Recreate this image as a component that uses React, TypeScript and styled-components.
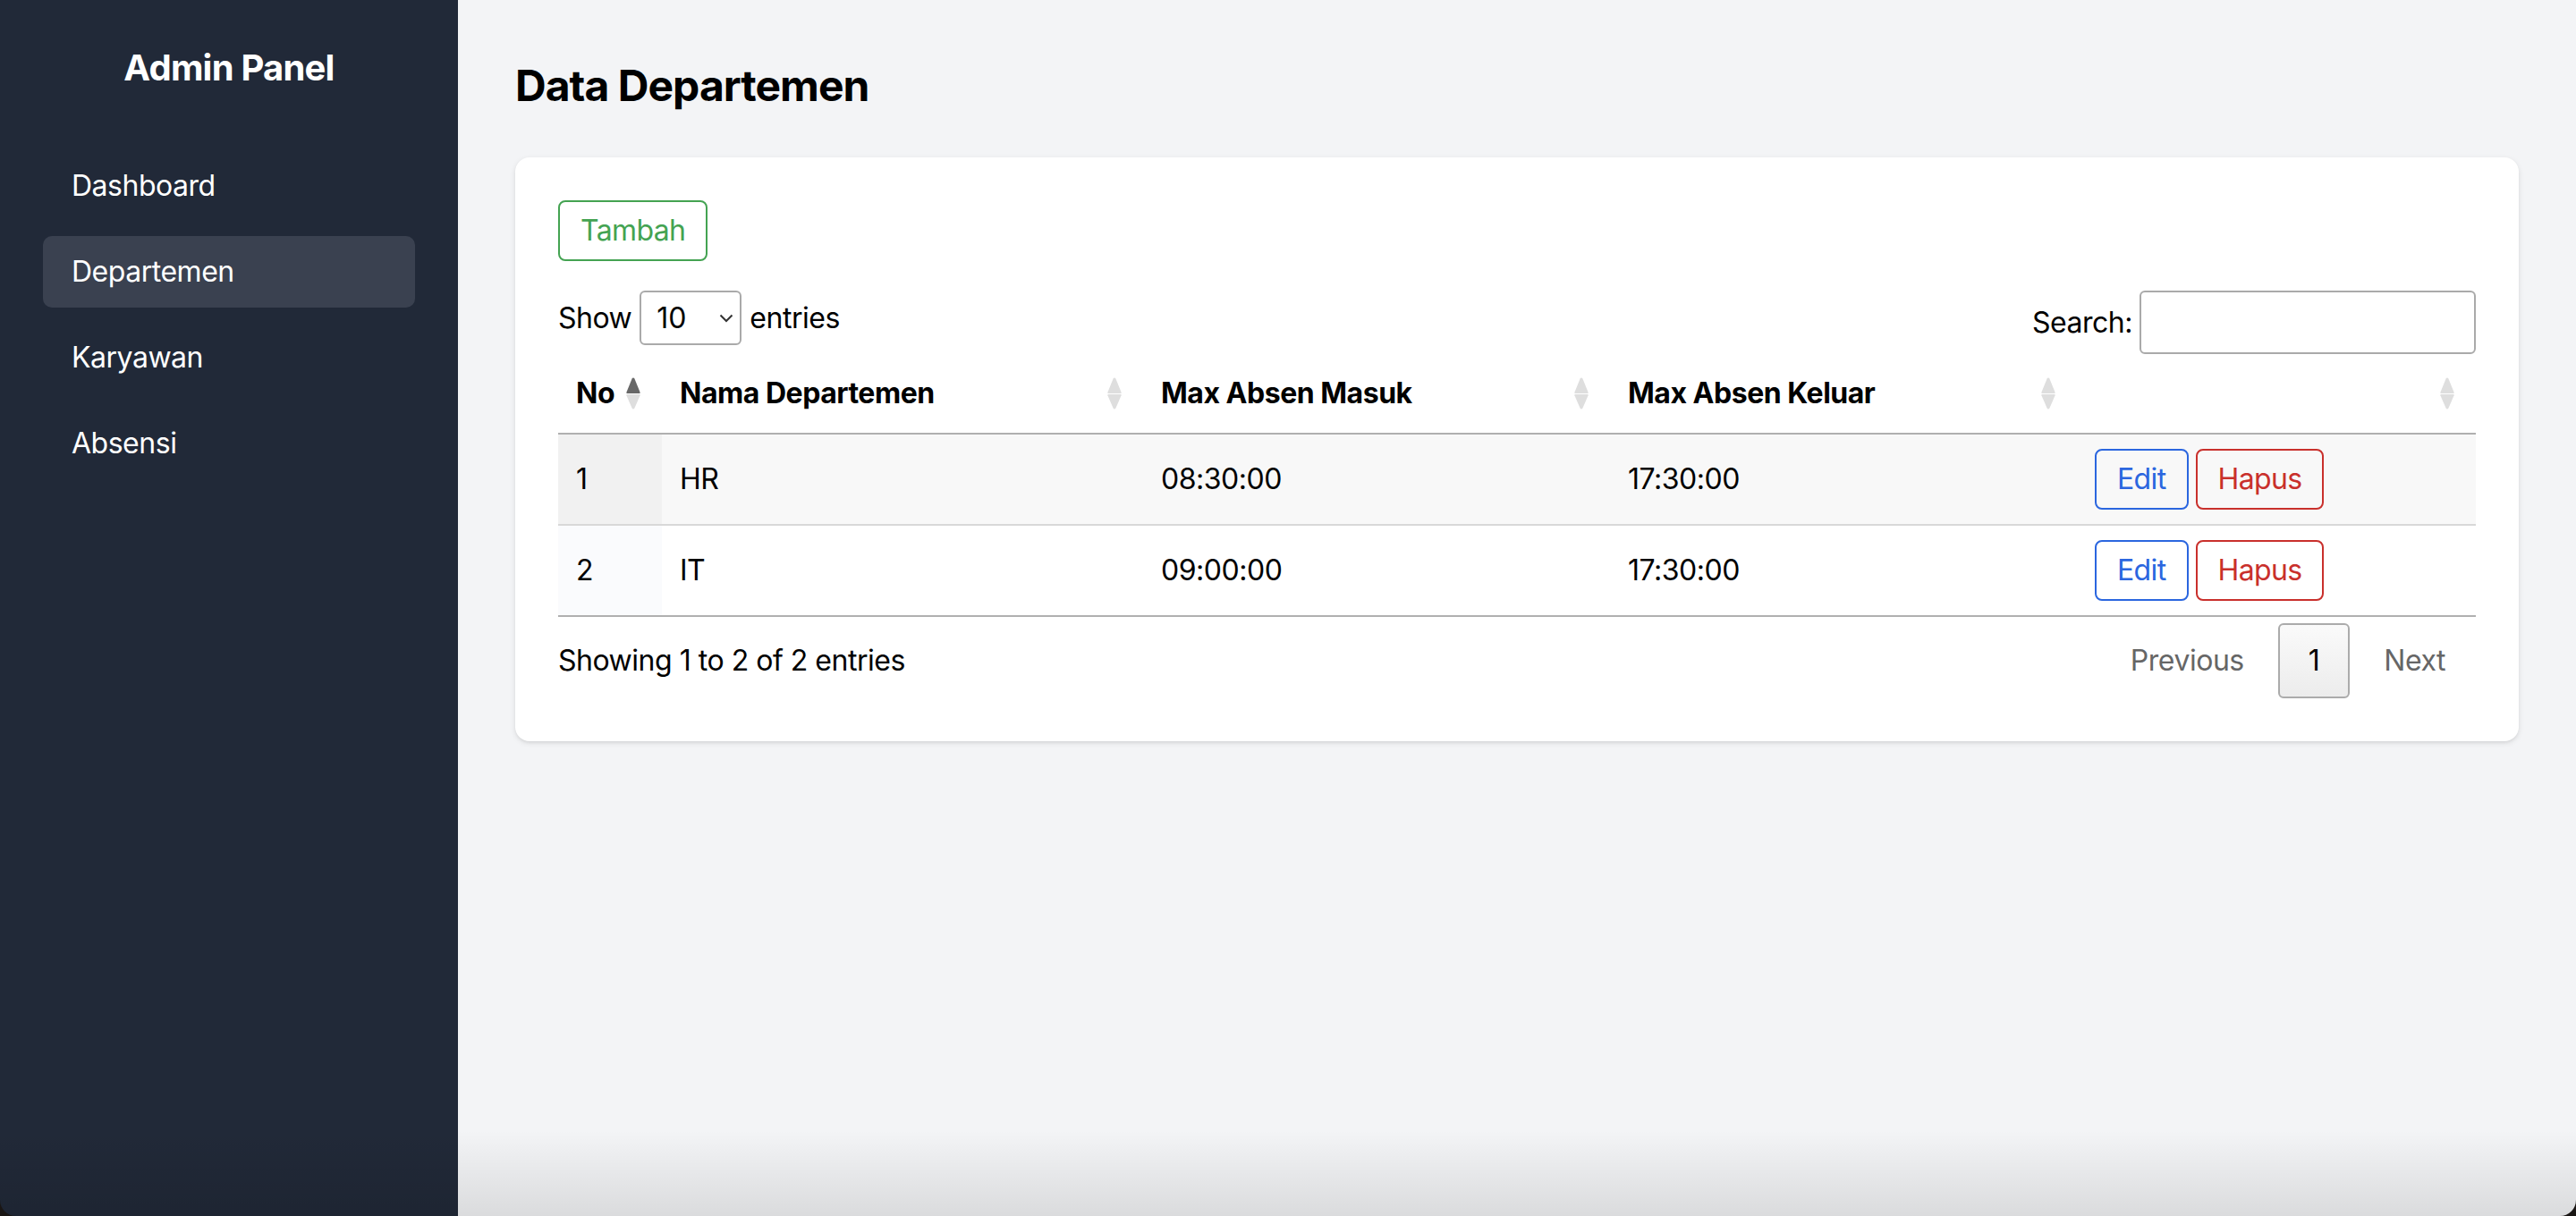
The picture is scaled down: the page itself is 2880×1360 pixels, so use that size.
import React from "react";
import styled, { createGlobalStyle } from "styled-components";

const GlobalStyle = createGlobalStyle`
  html, body {
    margin: 0;
    padding: 0;
    background: #1a1614;
  }
  body {
    font-family: Inter, "Noto Sans", "Liberation Sans", sans-serif;
    color: #000;
  }
  * { box-sizing: border-box; }
`;

const Frame = styled.div`
  position: relative;
  display: flex;
  width: 2880px;
  height: 1360px;
  border-radius: 0 0 18px 18px;
  overflow: hidden;
  &::after {
    content: "";
    position: absolute;
    left: 0;
    right: 0;
    bottom: 0;
    height: 96px;
    pointer-events: none;
    background: linear-gradient(to bottom, rgba(0, 0, 0, 0), rgba(0, 0, 0, 0.1));
  }
`;

const Sidebar = styled.aside`
  width: 512px;
  flex-shrink: 0;
  background: #212938;
  color: #fff;
  padding: 48px;
  display: flex;
  flex-direction: column;
`;

const Brand = styled.h1`
  margin: 0 0 64px;
  font-size: 40px;
  line-height: 56px;
  font-weight: 700;
  text-align: center;
  letter-spacing: -0.02em;
`;

const Nav = styled.nav`
  display: flex;
  flex-direction: column;
  gap: 16px;
`;

const NavItem = styled.a<{ $active?: boolean }>`
  display: block;
  padding: 16px 32px;
  font-size: 32px;
  line-height: 48px;
  color: #fff;
  text-decoration: none;
  border-radius: 10px;
  letter-spacing: -0.015em;
  background: ${(p) => (p.$active ? "#3a4150" : "transparent")};
`;

const Main = styled.main`
  flex: 1;
  background: #f3f4f6;
  padding: 64px;
`;

const PageTitle = styled.h2`
  margin: 0 0 48px;
  font-size: 48px;
  line-height: 64px;
  font-weight: 700;
  letter-spacing: -0.02em;
`;

const Card = styled.section`
  background: #fff;
  border-radius: 16px;
  box-shadow: 0 2px 6px rgba(0, 0, 0, 0.1), 0 2px 4px -2px rgba(0, 0, 0, 0.1);
  padding: 48px;
  font-size: 32px;
  line-height: 48px;
  letter-spacing: -0.015em;
`;

const OutlineButton = styled.button<{ $color: string }>`
  display: inline-block;
  font-family: inherit;
  font-size: 32px;
  line-height: 48px;
  letter-spacing: -0.02em;
  padding: 8px 23px;
  border: 2px solid ${(p) => p.$color};
  color: ${(p) => p.$color};
  background: transparent;
  border-radius: 8px;
  cursor: pointer;
`;

const AddRow = styled.div`
  margin-bottom: 33px;
`;

const Controls = styled.div`
  display: flex;
  justify-content: space-between;
  align-items: flex-start;
`;

const LabelGroup = styled.label<{ $gap?: number }>`
  display: flex;
  align-items: center;
  gap: ${(p) => p.$gap ?? 9}px;
`;

const SelectWrap = styled.span`
  position: relative;
  display: inline-flex;
`;

const Select = styled.select`
  appearance: none;
  -webkit-appearance: none;
  width: 114px;
  height: 61px;
  padding: 0 0 0 17px;
  border: 2px solid #aaa;
  border-radius: 6px;
  background: transparent;
  font-family: inherit;
  font-size: 32px;
  color: #000;
`;

const Chevron = styled.svg`
  position: absolute;
  right: 9px;
  top: 26px;
  pointer-events: none;
`;

const SearchInput = styled.input`
  width: 376px;
  height: 71px;
  border: 2px solid #aaa;
  border-radius: 6px;
  background: #fff;
  font-family: inherit;
  font-size: 32px;
  padding: 0 10px;
`;

const Table = styled.table`
  width: 100%;
  border-collapse: collapse;
  table-layout: fixed;
`;

const Th = styled.th`
  text-align: left;
  font-weight: 700;
  padding: 20px 24px 20px 20px;
  border-bottom: 2px solid #b0b0b0;
`;

const ThInner = styled.div`
  display: flex;
  align-items: center;
  justify-content: space-between;
  gap: 8px;
`;

const Tr = styled.tr<{ $odd?: boolean }>`
  background: ${(p) => (p.$odd ? "#f8f8f8" : "#fff")};
  &:not(:first-child) td {
    border-top: 2px solid #d8d8d8;
  }
  &:last-child td {
    border-bottom: 2px solid #b0b0b0;
  }
`;

const Td = styled.td<{ $sorted?: boolean; $odd?: boolean }>`
  padding: 16px 20px;
  vertical-align: middle;
  background: ${(p) => (p.$sorted ? (p.$odd ? "#f1f1f1" : "#fafbfd") : "transparent")};
`;

const Actions = styled.div`
  display: flex;
  gap: 8px;
`;

const Footer = styled.div`
  display: flex;
  justify-content: space-between;
  align-items: center;
  margin-top: 7px;
`;

const Pager = styled.div`
  display: flex;
  align-items: center;
`;

const PageButton = styled.span<{ $current?: boolean }>`
  display: inline-block;
  margin-left: 4px;
  padding: 16px 32px;
  border: 2px solid ${(p) => (p.$current ? "#ababab" : "transparent")};
  border-radius: 6px;
  color: ${(p) => (p.$current ? "#000" : "#666")};
  background: ${(p) =>
    p.$current ? "linear-gradient(to bottom, #fafafa 0%, #ececec 100%)" : "transparent"};
`;

const SortIcon: React.FC<{ active?: boolean }> = ({ active }) => (
  <svg width="16" height="36" viewBox="0 0 16 36" aria-hidden="true">
    <path
      d="M8 0.5 Q8.8 0.5 9.4 1.6 L15.6 16.8 Q16 18 14.8 18 L1.2 18 Q0 18 0.4 16.8 L6.6 1.6 Q7.2 0.5 8 0.5 Z"
      fill={active ? "#686868" : "#dedede"}
    />
    <path
      d="M1.2 19 L14.8 19 Q16 19 15.6 20.2 L9.4 34.4 Q8.8 35.5 8 35.5 Q7.2 35.5 6.6 34.4 L0.4 20.2 Q0 19 1.2 19 Z"
      fill="#dedede"
    />
  </svg>
);

const columns = [
  { title: "No", width: 116, active: true },
  { title: "Nama Departemen", width: 538 },
  { title: "Max Absen Masuk", width: 522 },
  { title: "Max Absen Keluar", width: 522 },
  { title: "", width: 446 },
];

const rows = [
  { no: 1, name: "HR", masuk: "08:30:00", keluar: "17:30:00" },
  { no: 2, name: "IT", masuk: "09:00:00", keluar: "17:30:00" },
];

export default function App() {
  return (
    <>
      <GlobalStyle />
      <Frame>
        <Sidebar>
          <Brand>Admin Panel</Brand>
          <Nav>
            <NavItem href="#">Dashboard</NavItem>
            <NavItem href="#" $active>
              Departemen
            </NavItem>
            <NavItem href="#">Karyawan</NavItem>
            <NavItem href="#">Absensi</NavItem>
          </Nav>
        </Sidebar>
        <Main>
          <PageTitle>Data Departemen</PageTitle>
          <Card>
            <AddRow>
              <OutlineButton $color="#44a352">Tambah</OutlineButton>
            </AddRow>
            <Controls>
              <LabelGroup>
                Show
                <SelectWrap>
                  <Select defaultValue="10">
                    <option value="10">10</option>
                    <option value="25">25</option>
                    <option value="50">50</option>
                    <option value="100">100</option>
                  </Select>
                  <Chevron width="16" height="10" viewBox="0 0 16 10">
                    <path d="M1.5 1.5 L8 8 L14.5 1.5" fill="none" stroke="#333" strokeWidth="2" />
                  </Chevron>
                </SelectWrap>
                entries
              </LabelGroup>
              <LabelGroup $gap={8}>
                Search:
                <SearchInput type="search" />
              </LabelGroup>
            </Controls>
            <Table>
              <colgroup>
                {columns.map((c, i) => (
                  <col key={i} style={{ width: c.width }} />
                ))}
              </colgroup>
              <thead>
                <tr>
                  {columns.map((c, i) => (
                    <Th key={i}>
                      <ThInner>
                        <span>{c.title}</span>
                        <SortIcon active={c.active} />
                      </ThInner>
                    </Th>
                  ))}
                </tr>
              </thead>
              <tbody>
                {rows.map((r, i) => {
                  const odd = i % 2 === 0;
                  return (
                    <Tr key={r.no} $odd={odd}>
                      <Td $sorted $odd={odd}>
                        {r.no}
                      </Td>
                      <Td>{r.name}</Td>
                      <Td>{r.masuk}</Td>
                      <Td>{r.keluar}</Td>
                      <Td>
                        <Actions>
                          <OutlineButton $color="#2b66df">Edit</OutlineButton>
                          <OutlineButton $color="#c9302c">Hapus</OutlineButton>
                        </Actions>
                      </Td>
                    </Tr>
                  );
                })}
              </tbody>
            </Table>
            <Footer>
              <span>Showing 1 to 2 of 2 entries</span>
              <Pager>
                <PageButton>Previous</PageButton>
                <PageButton $current>1</PageButton>
                <PageButton>Next</PageButton>
              </Pager>
            </Footer>
          </Card>
        </Main>
      </Frame>
    </>
  );
}
